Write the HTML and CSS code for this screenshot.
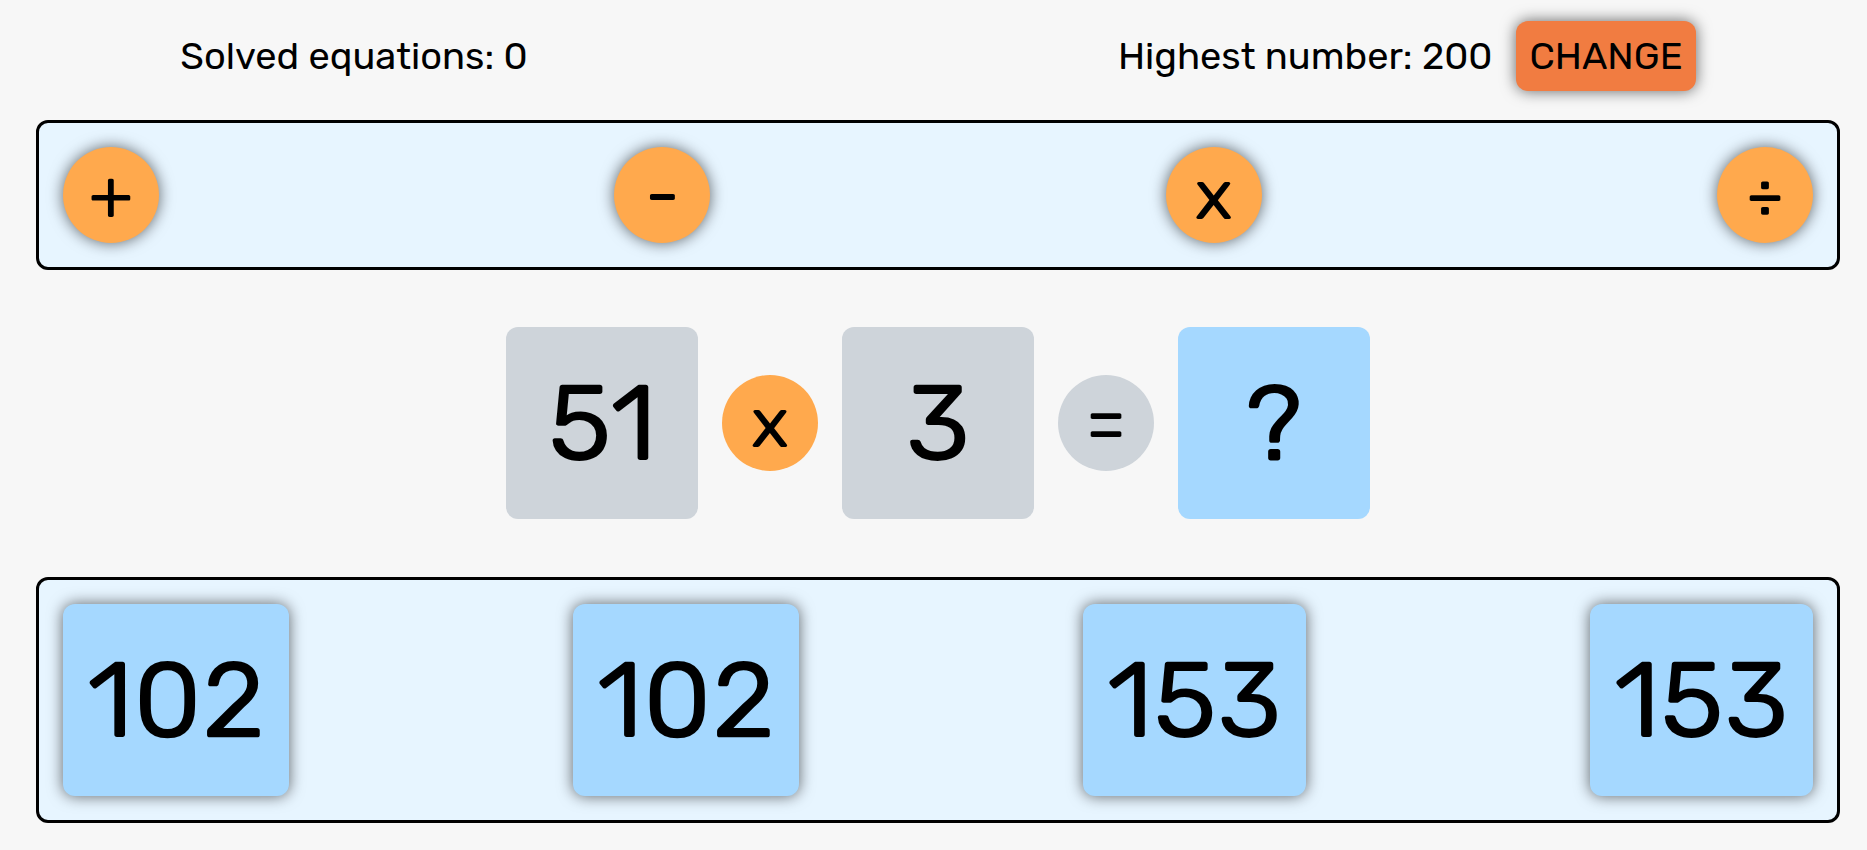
FILE: index.html
```html
<!DOCTYPE html>
<html lang="en">
<head>
  <meta charset="utf-8">
  <meta name="viewport" content="width=device-width, initial-scale=1">
  <title>Equations</title>
  <link rel="stylesheet" href="styles.css">
</head>
<body>
  <header class="status">
    <p class="status-text">Solved equations: 0</p>
    <div class="status-group">
      <p class="status-text">Highest number: 200</p>
      <button class="change raised" type="button">CHANGE</button>
    </div>
  </header>
  <main class="game">
    <section class="panel" aria-label="Operators">
      <button class="circle raised" type="button">+</button>
      <button class="circle raised" type="button">-</button>
      <button class="circle raised" type="button">x</button>
      <button class="circle raised" type="button">÷</button>
    </section>
    <section class="equation" aria-label="Equation">
      <div class="tile tile-given">51</div>
      <div class="circle">x</div>
      <div class="tile tile-given">3</div>
      <div class="circle circle-equals">=</div>
      <div class="tile">?</div>
    </section>
    <section class="panel" aria-label="Answers">
      <button class="tile tile-answer raised" type="button">102</button>
      <button class="tile tile-answer raised" type="button">102</button>
      <button class="tile tile-answer raised" type="button">153</button>
      <button class="tile tile-answer raised" type="button">153</button>
    </section>
  </main>
</body>
</html>
```

FILE: styles.css
```css
* {
  box-sizing: border-box;
}

body {
  margin: 0;
  padding: 21px 27px 27px 36px;
  background: #f7f7f7;
  color: #000;
  font-family: Rubik, Roboto, sans-serif;
  font-size: 38px;
  line-height: 46px;
}

button {
  border: 0;
  color: inherit;
  font: inherit;
  cursor: pointer;
}

.raised {
  box-shadow: 0 0 15px rgba(0, 0, 0, 0.6);
}

.status {
  display: flex;
  justify-content: space-between;
  align-items: center;
  margin-bottom: 29px;
  padding: 0 8%;
}

.status-group {
  display: flex;
  align-items: center;
  gap: 24px;
}

.status-text {
  margin: 0;
}

.change {
  padding: 12px 13px;
  border-radius: 12px;
  background: #f17c41;
}

.panel {
  display: flex;
  justify-content: space-between;
  padding: 24px;
  border: 3px solid #000;
  border-radius: 12px;
  background: #e7f5ff;
}

.equation {
  display: flex;
  justify-content: center;
  align-items: center;
  gap: 24px;
  margin: 57px 0 58px;
}

.circle {
  display: flex;
  justify-content: center;
  align-items: center;
  width: 96px;
  height: 96px;
  padding: 0;
  border-radius: 50%;
  background: #ffa94d;
  font-size: 72px;
  line-height: 84px;
}

.circle-equals {
  background: #ced4da;
}

.tile {
  display: flex;
  justify-content: center;
  align-items: center;
  min-width: 192px;
  height: 192px;
  border-radius: 12px;
  background: #a5d8ff;
  font-size: 108px;
  line-height: 128px;
}

.tile-given {
  background: #ced4da;
}

.tile-answer {
  padding: 0 24px;
}
```
